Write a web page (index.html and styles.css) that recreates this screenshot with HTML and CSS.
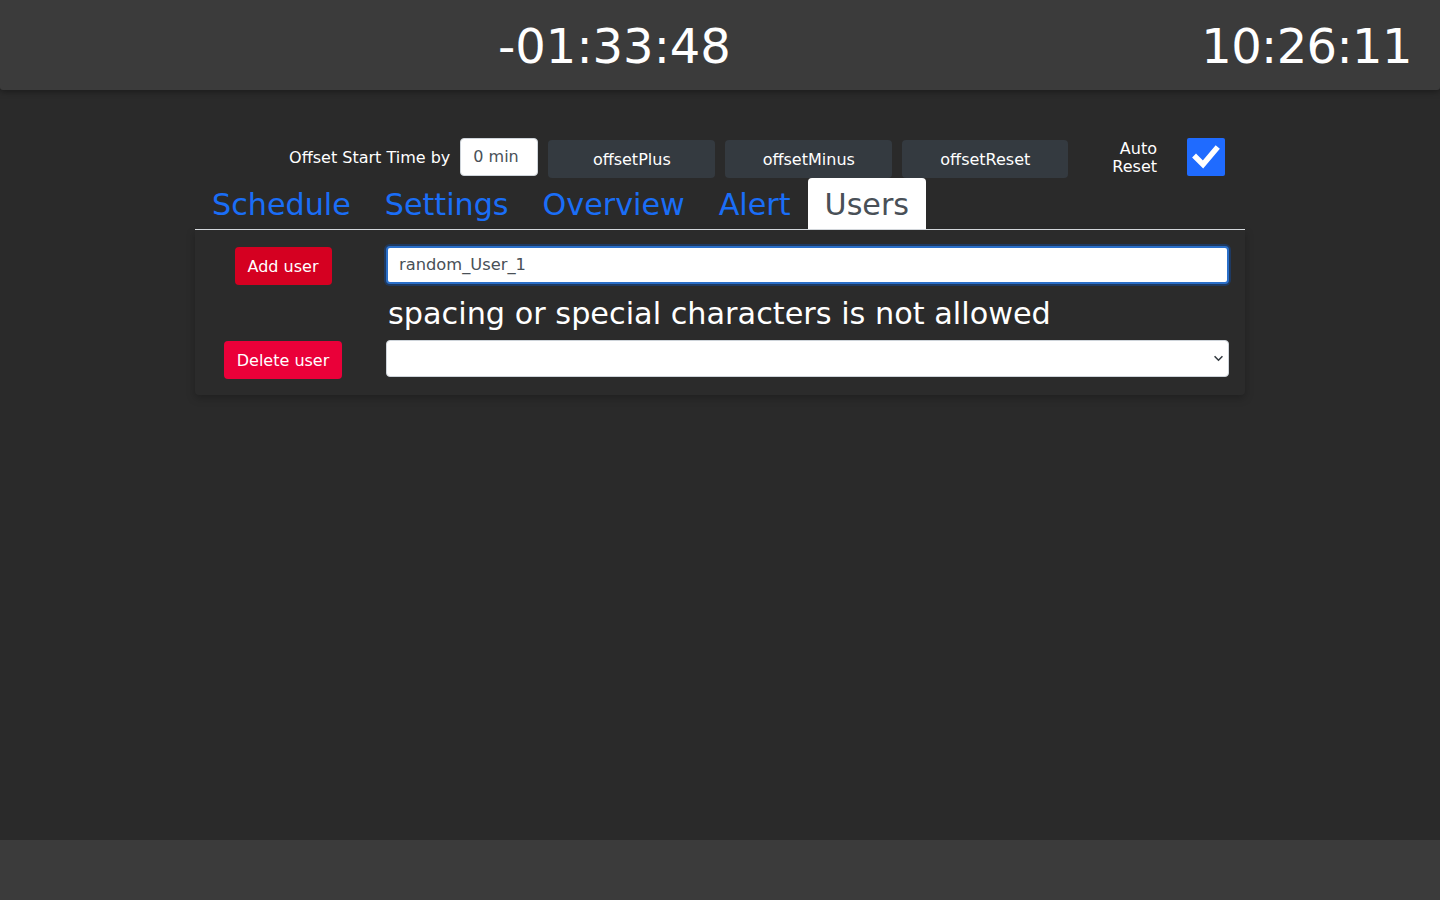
FILE: index.html
```html
<!DOCTYPE html>
<html lang="en">
<head>
<meta charset="utf-8">
<title>Users</title>
<link rel="stylesheet" href="styles.css">
</head>
<body>
<header class="topbar">
  <div class="clock countdown">-01:33:48</div>
  <div class="spacer"></div>
  <div class="clock now">10:26:11</div>
</header>
<main class="main">
  <div class="container">
    <div class="controls">
      <label class="offset-label">Offset Start Time by</label>
      <div class="offset-input">0 min</div>
      <button class="btn-dark">offsetPlus</button>
      <button class="btn-dark">offsetMinus</button>
      <button class="btn-dark">offsetReset</button>
      <div class="auto-label">Auto<br>Reset</div>
      <div class="checkbox">
        <svg viewBox="0 0 38 38" width="38" height="38"><path d="M9 19.5 L16 26.5 L29 11" fill="none" stroke="#fff" stroke-width="5.5" stroke-linecap="square" stroke-linejoin="miter"/></svg>
      </div>
    </div>
    <nav class="tabs">
      <a class="tab">Schedule</a>
      <a class="tab">Settings</a>
      <a class="tab">Overview</a>
      <a class="tab">Alert</a>
      <a class="tab active">Users</a>
    </nav>
    <section class="card">
      <div class="cell-btn"><button class="btn-red add">Add user</button></div>
      <div class="text-input focused">random_User_1</div>
      <div></div>
      <div class="message">spacing or special characters is not allowed</div>
      <div class="cell-btn"><button class="btn-red del">Delete user</button></div>
      <div class="select">
        <svg class="chev" viewBox="0 0 12 8" width="11" height="7"><path d="M1.5 1.5 L6 6 L10.5 1.5" fill="none" stroke="#343a40" stroke-width="1.8"/></svg>
      </div>
    </section>
  </div>
</main>
<footer class="footer"></footer>
</body>
</html>
```
FILE: styles.css
```css
* { box-sizing: border-box; }
html, body { margin: 0; padding: 0; }
body {
  background: #2a2a2a;
  color: #fff;
  font-family: "DejaVu Sans", sans-serif;
  height: 100vh;
  display: flex;
  flex-direction: column;
  overflow: hidden;
}
.topbar {
  height: 90px;
  flex: 0 0 90px;
  background: #3b3b3b;
  box-shadow: 0 2px 6px rgba(0,0,0,0.35);
  display: flex;
  align-items: center;
  padding: 0 28px 0 498px;
  border-bottom-left-radius: 3px;
  border-bottom-right-radius: 3px;
  position: relative;
  z-index: 1;
}
.clock {
  font-family: "DejaVu Sans", sans-serif;
  font-size: 48px;
  color: #fff;
  line-height: 1;
  margin-top: 2px;
}
.clock.now { letter-spacing: -0.6px; }
.spacer { flex: 1; }
.main { flex: 1; }
.container {
  width: 1050px;
  margin: 48px auto 0;
}
.controls {
  display: flex;
  align-items: flex-start;
  justify-content: flex-end;
  padding-right: 20px;
  height: 40px;
}
.offset-label {
  font-size: 16px;
  line-height: 40px;
  margin-right: 10px;
}
.offset-input {
  width: 78px;
  height: 38px;
  background: #fff;
  border: 1px solid #ced4da;
  border-radius: 4px;
  color: #495057;
  font-size: 16px;
  line-height: 36px;
  padding-left: 12px;
  margin-right: 10px;
}
.btn-dark {
  width: 167px;
  height: 38px;
  margin-top: 2px;
  margin-right: 10px;
  background: #343a40;
  border: none;
  border-radius: 4px;
  color: #fff;
  font-family: inherit;
  font-size: 16px;
}
.btn-dark:nth-of-type(3) { margin-right: 0; width: 166px; }
.auto-label {
  margin-left: 44px;
  font-size: 16px;
  line-height: 18px;
  text-align: right;
  padding-top: 2px;
  margin-right: 30px;
}
.checkbox {
  width: 38px;
  height: 38px;
  background: #1f6bff;
  border-radius: 2px;
}
.checkbox svg { display: block; }
.tabs {
  display: flex;
  border-bottom: 1px solid #dee2e6;
  height: 52px;
}
.tab {
  font-size: 30.2px;
  line-height: 35px;
  padding: 9px 17px 7px 17px;
  color: #1a6ef7;
  border-top-left-radius: 4px;
  border-top-right-radius: 4px;
}
.tab.active {
  background: #fff;
  color: #495057;
}
.card {
  display: grid;
  grid-template-columns: 176px 1fr;
  column-gap: 15px;
  padding: 16px 16px 16px 0;
  background: #2b2b2b;
  box-shadow: 0 3px 8px rgba(0,0,0,0.25);
  border-radius: 0 0 4px 4px;
}
.cell-btn {
  display: flex;
  justify-content: center;
  align-items: flex-start;
}
.btn-red {
  height: 38px;
  border: none;
  border-radius: 4px;
  color: #fff;
  font-family: inherit;
  font-size: 16px;
  padding: 0 12px;
}
.btn-red.add { background: #d50021; margin-top: 1px; width: 97px; }
.btn-red.del { background: #ea0039; margin-top: 1px; width: 118px; }
.text-input {
  height: 38px;
  background: #fff;
  border: 2px solid #2a6fc9;
  box-shadow: 0 0 0 2px rgba(20,70,140,0.55);
  border-radius: 4px;
  color: #495057;
  font-size: 16.3px;
  line-height: 34px;
  padding-left: 11px;
}
.message {
  font-size: 30.3px;
  line-height: 48px;
  margin: 5px 0 2px 2px;
  white-space: nowrap;
}
.select {
  height: 37px;
  background: #fff;
  border: 1px solid #ced4da;
  border-radius: 4px;
  display: flex;
  align-items: center;
  justify-content: flex-end;
  padding-right: 4px;
}
.chev { display: block; }
.footer {
  height: 60px;
  flex: 0 0 60px;
  background: #3b3b3b;
}
```
